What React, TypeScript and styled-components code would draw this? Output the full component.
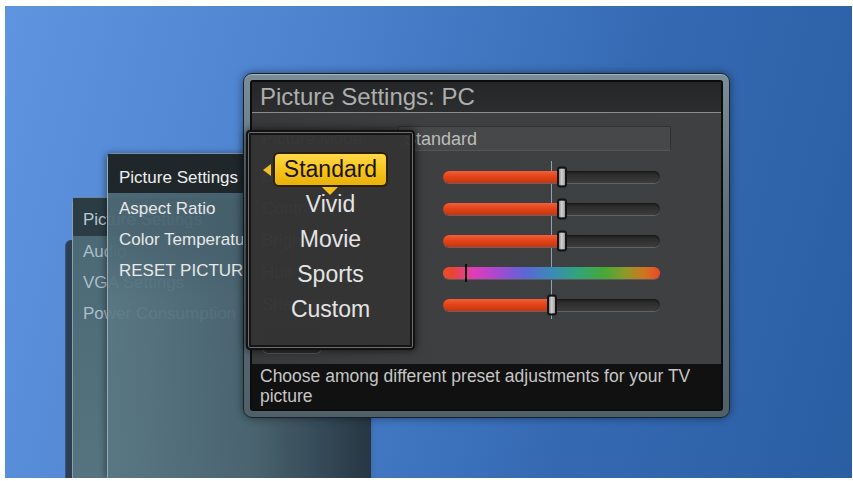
import styled, { createGlobalStyle } from 'styled-components'

const GlobalStyle = createGlobalStyle`
html, body {
  margin: 0;
  padding: 0;
  background: #ffffff;
}
body {
  font-family: "Liberation Sans", Arial, sans-serif;
}
`

const sliders = [
  { label: 'Backlight', value: 55 },
  { label: 'Contrast', value: 55 },
  { label: 'Brightness', value: 55 },
  { label: 'Hue', value: 10, hue: true },
  { label: 'Sharpness', value: 50 },
]

const presets = ['Standard', 'Vivid', 'Movie', 'Sports', 'Custom']

const App = () => {
  return (
    <>
      <GlobalStyle />
      <Screen>
        <BackStrip />

        <MainMenu>
          <MenuHeader $dim>Picture Settings</MenuHeader>
          <MenuItem $dim>Audio</MenuItem>
          <MenuItem $dim>VGA Settings</MenuItem>
          <MenuItem $dim>Power Consumption</MenuItem>
        </MainMenu>

        <SubMenu>
          <MenuHeader>Picture Settings</MenuHeader>
          <MenuItem>Aspect Ratio</MenuItem>
          <MenuItem>Color Temperature</MenuItem>
          <MenuItem>RESET PICTURE</MenuItem>
        </SubMenu>

        <Dialog>
          <Inner>
            <Title>Picture Settings: PC</Title>
            <Content>
              <ModeRow>
                <Label $width={136}>Picture Mode</Label>
                <ValueBox>Standard</ValueBox>
              </ModeRow>

              <SliderList>
                <CenterLine />
                {sliders.map((s) => (
                  <SliderRow key={s.label}>
                    <Label $width={181}>{s.label}</Label>
                    {s.hue ? (
                      <HueTrack>
                        <HueMarker style={{ left: `${s.value}%` }} />
                      </HueTrack>
                    ) : (
                      <Track>
                        <Fill style={{ width: `${s.value}%` }} />
                        <Knob style={{ left: `${s.value}%` }} />
                      </Track>
                    )}
                  </SliderRow>
                ))}
              </SliderList>

              <DoneButton />
            </Content>
            <Help>Choose among different preset adjustments for your TV picture</Help>
          </Inner>

          <Popup>
            {presets.map((p, i) => (
              <PresetRow key={p}>
                {i === 0 ? <Selected>{p}</Selected> : p}
              </PresetRow>
            ))}
          </Popup>
        </Dialog>
      </Screen>
    </>
  )
}

export default App

const Screen = styled.div`
position: relative;
margin: 6px 1px 0 5px;
height: 472px;
overflow: hidden;
background: linear-gradient(104deg, #5f94e0 0%, #4b81cd 35%, #356ab3 68%, #2a5ea3 100%);
`

const BackStrip = styled.div`
position: absolute;
left: 60px;
top: 234px;
bottom: 0;
width: 60px;
border-radius: 6px 0 0 0;
background: linear-gradient(90deg, #2c3f57, #1f2d3d);
border-left: 1px solid #3e5670;
`

const MainMenu = styled.div`
position: absolute;
left: 67px;
top: 191px;
bottom: 0;
width: 230px;
display: flex;
flex-direction: column;
border-radius: 6px 0 0 0;
border-left: 1px solid #8aa0aa;
border-top: 1px solid #6f8791;
background: linear-gradient(180deg, #4a6774 0%, #557480 100%);
`

const SubMenu = styled.div`
position: absolute;
left: 102px;
top: 147px;
bottom: 0;
width: 263px;
display: flex;
flex-direction: column;
border-radius: 6px 0 0 0;
border-left: 1px solid #97acb5;
border-top: 1px solid #7a9099;
background:
  linear-gradient(180deg, rgba(66, 92, 104, 0.6) 0%, rgba(66, 92, 104, 0.45) 30%, rgba(66, 92, 104, 0) 45%),
  linear-gradient(90deg, rgba(90, 120, 132, 0.9) 0%, rgba(72, 98, 110, 0.91) 55%, rgba(38, 52, 62, 0.97) 100%);
box-shadow: -2px 0 6px rgba(0, 0, 0, 0.35);
`

const MenuHeader = styled.div<{ $dim?: boolean }>`
padding: ${(p) => (p.$dim ? '6px 0 1px 10px' : '8px 0 0 11px')};
line-height: 31px;
font-size: 17px;
white-space: nowrap;
color: ${(p) => (p.$dim ? '#b9c9d1' : '#eeeeee')};
background: ${(p) => (p.$dim ? '#2b3c45' : '#1f272b')};
`

const MenuItem = styled.div<{ $dim?: boolean }>`
padding-left: ${(p) => (p.$dim ? '10px' : '11px')};
line-height: 31px;
font-size: 17px;
white-space: nowrap;
color: ${(p) => (p.$dim ? '#aebfc8' : '#e8e8e8')};
`

const Dialog = styled.div`
position: absolute;
left: 238px;
top: 67px;
width: 487px;
height: 345px;
box-sizing: border-box;
padding: 6px;
border: 1px solid #16222b;
border-radius: 9px;
background: linear-gradient(180deg, #7b8d96 0%, #5e7079 40%, #4f6069 100%);
box-shadow: 0 0 8px rgba(0, 0, 0, 0.45), inset 0 1px 0 #a7b6bd;
`

const Inner = styled.div`
height: 100%;
box-sizing: border-box;
display: flex;
flex-direction: column;
border: 2px solid #0c0c0c;
border-radius: 3px;
overflow: hidden;
background: #3c3e40;
`

const Title = styled.div`
height: 30px;
line-height: 30px;
padding-left: 8px;
font-size: 24px;
color: #aeaeae;
border-bottom: 1px solid #8c8c8c;
background: linear-gradient(180deg, #252627 0%, #2c2d2e 100%);
`

const Content = styled.div`
flex: 1;
display: flex;
flex-direction: column;
padding: 13px 0 10px 10px;
background: linear-gradient(90deg, #37393b 0%, #3d3f41 40%, #3e4042 100%);
`

const ModeRow = styled.div`
display: flex;
align-items: center;
height: 25px;
`

const Label = styled.div<{ $width: number }>`
width: ${(p) => p.$width}px;
flex-shrink: 0;
font-size: 17px;
color: #8e8e8e;
white-space: nowrap;
`

const ValueBox = styled.div`
width: 273px;
height: 25px;
box-sizing: border-box;
padding-left: 5px;
line-height: 24px;
font-size: 18px;
color: #bcbcbc;
background: #474849;
border: 1px solid #303132;
border-bottom-color: #545556;
`

const SliderList = styled.div`
position: relative;
margin-top: 10px;
`

const CenterLine = styled.div`
position: absolute;
left: 289px;
top: 0;
width: 1px;
height: 158px;
background: #8ea2b3;
`

const SliderRow = styled.div`
display: flex;
align-items: center;
height: 32px;
`

const Track = styled.div`
position: relative;
width: 217px;
height: 12px;
border-radius: 6px;
background: linear-gradient(180deg, #262626 0%, #333333 60%, #3e3e3e 100%);
box-shadow: 0 1px 0 #616263, inset 0 1px 2px rgba(0, 0, 0, 0.5);
`

const Fill = styled.div`
height: 100%;
border-radius: 6px 0 0 6px;
background: linear-gradient(180deg, #f2603a 0%, #e24418 45%, #c9360f 100%);
`

const Knob = styled.div`
position: absolute;
top: 50%;
width: 10px;
height: 21px;
transform: translate(-50%, -50%);
box-sizing: border-box;
border: 2px solid #141414;
border-radius: 3px;
background: linear-gradient(90deg, #8a8a8a 0%, #d4d4d4 45%, #9a9a9a 100%);
`

const HueTrack = styled.div`
position: relative;
width: 217px;
height: 12px;
border-radius: 6px;
background: linear-gradient(90deg, #ea4f2c 0%, #e8452e 4%, #e23cb8 14%, #a24ad2 26%, #5c66d6 38%, #3a8ab8 50%, #33a37c 62%, #45a838 74%, #8c9a28 84%, #d3731f 93%, #e8482a 100%);
box-shadow: 0 1px 0 #5a5b5c;
`

const HueMarker = styled.div`
position: absolute;
top: -3px;
width: 2px;
height: 18px;
background: #0a0a0a;
`

const DoneButton = styled.div`
margin-top: auto;
width: 58px;
height: 25px;
border-radius: 0 0 6px 6px;
background: #2c2d2e;
border: 1px solid #555657;
border-top: none;
`

const Help = styled.div`
height: 45px;
box-sizing: border-box;
padding: 2px 8px 0 8px;
font-size: 17.5px;
line-height: 20px;
color: #c6c6c6;
background: #111111;
`

const Popup = styled.div`
position: absolute;
left: 2px;
top: 56px;
width: 169px;
height: 220px;
box-sizing: border-box;
padding-top: 20px;
display: flex;
flex-direction: column;
align-items: center;
border: 2px solid #121212;
border-radius: 4px;
background: rgba(52, 52, 52, 0.96);
box-shadow: inset 0 0 0 1px #6e6e6e, inset 0 0 0 3px #151515, 0 0 8px rgba(0, 0, 0, 0.7);
`

const PresetRow = styled.div`
height: 35px;
line-height: 35px;
font-size: 23px;
color: #e4e4e4;
white-space: nowrap;
`

const Selected = styled.div`
position: relative;
height: 35px;
box-sizing: border-box;
padding: 0 9px;
line-height: 31px;
color: #1a1405;
border: 2px solid #2a2108;
border-radius: 6px;
background: linear-gradient(180deg, #ffd84a 0%, #f6c41c 50%, #e9b10c 100%);

&::before {
  content: '';
  position: absolute;
  left: -12px;
  top: 50%;
  transform: translateY(-50%);
  border-right: 8px solid #f2c01c;
  border-top: 6px solid transparent;
  border-bottom: 6px solid transparent;
}

&::after {
  content: '';
  position: absolute;
  left: 50%;
  bottom: -10px;
  transform: translateX(-50%);
  border-top: 8px solid #f2c01c;
  border-left: 8px solid transparent;
  border-right: 8px solid transparent;
}
`
